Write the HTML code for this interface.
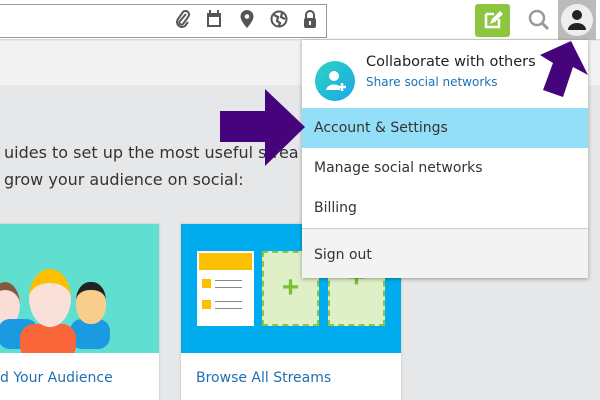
<!DOCTYPE html>
<html><head><style>
*{margin:0;padding:0;box-sizing:border-box}
html,body{width:600px;height:400px;overflow:hidden}
body{background:#e6e7e8;font-family:"DejaVu Sans","Liberation Sans",sans-serif;position:relative}
.top{position:absolute;left:0;top:0;width:600px;height:40px;background:#fff;border-bottom:1px solid #d8d8d8}
.inp{position:absolute;left:-2px;top:4px;width:329px;height:34px;border:1px solid #999;background:#fff}
.band{position:absolute;left:0;top:41px;width:600px;height:44px;background:#f2f2f2}
.ic{position:absolute;top:10px;fill:#555}
.txt{position:absolute;left:4px;top:139px;font-size:16px;color:#333;line-height:27px;white-space:nowrap}
.card{position:absolute;top:224px;background:#fff;box-shadow:0 0 2px #bbb}
.dd{position:absolute;left:302px;top:40px;width:286px;height:238px;background:#fff;box-shadow:0 1px 4px rgba(0,0,0,.35)}
.it{position:absolute;left:0;width:286px;font-size:14px;color:#333;padding-left:12px}
</style></head><body>
<div class="top">
<div class="inp"></div>
<svg class="ic" style="left:175px" width="16" height="18" viewBox="0 0 16 18"><path d="M11 4 L5 11 a2 2 0 0 0 3 3 L13 7 a3.5 3.5 0 0 0-5-5 L3 9 a5 5 0 0 0 7 7 L13 12" fill="none" stroke="#555" stroke-width="2"/></svg>
<svg class="ic" style="left:206px" width="16" height="18"><rect x="1" y="3" width="14" height="14" fill="#555"/><rect x="3" y="7" width="10" height="8" fill="#fff"/><rect x="3" y="0" width="2" height="4"/><rect x="11" y="0" width="2" height="4"/></svg>
<svg class="ic" style="left:240px" width="14" height="18"><path d="M7 0a6.5 6.5 0 0 1 6.5 6.5C13.5 11 7 18 7 18S0.5 11 0.5 6.5A6.5 6.5 0 0 1 7 0z"/><circle cx="7" cy="6.5" r="2.3" fill="#fff"/></svg>
<svg class="ic" style="left:270px" width="18" height="18"><circle cx="9" cy="9" r="7.5" fill="none" stroke="#555" stroke-width="2"/><path d="M4 5 L8 7 L7 11 L10 13 L9 16 M12 3 L11 7 L15 9"  stroke="#555" stroke-width="2.2" fill="none"/></svg>
<svg class="ic" style="left:303px" width="14" height="18"><path d="M3 8V5a4 4 0 0 1 8 0v3" fill="none" stroke="#555" stroke-width="2"/><rect x="1" y="8" width="12" height="10" rx="2"/><rect x="6" y="11" width="2" height="4" fill="#fff"/></svg>
<div style="position:absolute;left:475px;top:4px;width:35px;height:33px;background:#8cc63e;border-radius:3px"><svg width="35" height="33"><path d="M11 10h8M11 10v13h13v-8" stroke="#fff" stroke-width="2.5" fill="none"/><path d="M15 20l2-5 8-8 3 3-8 8z" fill="#fff"/></svg></div>
<svg style="position:absolute;left:527px;top:8px" width="24" height="24"><circle cx="10" cy="10" r="7" fill="none" stroke="#999" stroke-width="2.5"/><path d="M15 15l6 6" stroke="#999" stroke-width="3"/></svg>
<div style="position:absolute;left:558px;top:0;width:38px;height:40px;background:#bbb"><div style="position:absolute;left:3px;top:4px;width:32px;height:32px;border-radius:50%;background:#eee"></div><svg style="position:absolute;left:0;top:0" width="38" height="40"><circle cx="19" cy="15" r="5" fill="#222"/><path d="M10 30a9 7 0 0 1 18 0z" fill="#222"/></svg></div>
</div>
<div class="band"></div>
<div class="txt">uides to set up the most useful strea<br>grow your audience on social:</div>
<div class="card" style="left:-10px;width:169px;height:176px">
<div style="height:129px;background:#60dfd0;position:relative;overflow:hidden">
<div style="position:absolute;left:0;top:58px;width:30px;height:46px;border-radius:50%;background:#f9ddd6;border-top:8px solid #845a3e"></div>
<div style="position:absolute;left:8px;top:95px;width:40px;height:30px;border-radius:12px;background:#1a9ae0"></div>
<div style="position:absolute;left:80px;top:95px;width:40px;height:30px;border-radius:12px;background:#1a9ae0"></div>
<div style="position:absolute;left:30px;top:100px;width:56px;height:36px;border-radius:14px;background:#fb653a"></div>
<div style="position:absolute;left:39px;top:45px;width:42px;height:58px;border-radius:50%;background:#f9e0d8;border-top:14px solid #fdc000"></div>
<div style="position:absolute;left:86px;top:58px;width:30px;height:42px;border-radius:45%;background:#f7ce8c;border-top:8px solid #222"></div>
</div>
<div style="padding:17px 0 0 10px;font-size:14px;color:#1f6fb2">d Your Audience</div></div>
<div class="card" style="left:181px;width:220px;height:176px">
<div style="height:129px;background:#00aced;position:relative">
<div style="position:absolute;left:16px;top:27px;width:57px;height:75px;background:#fff"><div style="margin:2px;height:17px;background:#fdc000"></div><div style="position:absolute;left:5px;top:28px;width:9px;height:9px;background:#fdc000"></div><div style="position:absolute;left:5px;top:49px;width:9px;height:9px;background:#fdc000"></div><div style="position:absolute;left:18px;top:29px;width:27px;height:8px;border-top:1px solid #888;border-bottom:1px solid #888"></div><div style="position:absolute;left:18px;top:50px;width:27px;height:8px;border-top:1px solid #888;border-bottom:1px solid #888"></div></div>
<div style="position:absolute;left:81px;top:27px;width:57px;height:75px;background:#dff0c8;border:2px dashed #8cc63e;color:#7cbf35;font:bold 30px sans-serif;text-align:center;line-height:70px">+</div>
<div style="position:absolute;left:147px;top:27px;width:57px;height:75px;background:#dff0c8;border:2px dashed #8cc63e;color:#7cbf35;font:bold 30px sans-serif;text-align:center;line-height:50px">+</div>
</div>
<div style="padding:17px 0 0 15px;font-size:14px;color:#1f6fb2">Browse All Streams</div></div>
<div class="dd">
<div style="position:absolute;left:13px;top:21px;width:40px;height:40px;border-radius:50%;background:linear-gradient(135deg,#2fd2c4,#1aa8e8)"><svg width="40" height="40"><circle cx="19" cy="15" r="5" fill="#fff"/><path d="M11 29a8 7 0 0 1 14-3v3z" fill="#fff"/><path d="M27 22v8M23 26h8" stroke="#fff" stroke-width="2.5"/></svg></div>
<div style="position:absolute;left:64px;top:14px;font-size:14.5px;color:#222">Collaborate with others</div>
<div style="position:absolute;left:64px;top:35px;font-size:12px;color:#1a73b8">Share social networks</div>
<div class="it" style="top:68px;height:40px;background:#93dff8;line-height:40px">Account &amp; Settings</div>
<div class="it" style="top:108px;height:40px;line-height:40px">Manage social networks</div>
<div class="it" style="top:148px;height:40px;line-height:40px">Billing</div>
<div style="position:absolute;left:0;top:188px;width:286px;height:50px;background:#f3f3f3;border-top:1px solid #ccc"></div>
<div class="it" style="top:190px;height:50px;line-height:50px">Sign out</div>
</div>
<svg style="position:absolute;left:0;top:0" width="600" height="400"><polygon points="220,111 265,111 265,89 305,127 265,166 265,142 220,142" fill="#45047c"/>
<polygon points="571,41 588,75 573,67 563,97 543,90 553,63 540,55" fill="#45047c"/></svg>
</body></html>
